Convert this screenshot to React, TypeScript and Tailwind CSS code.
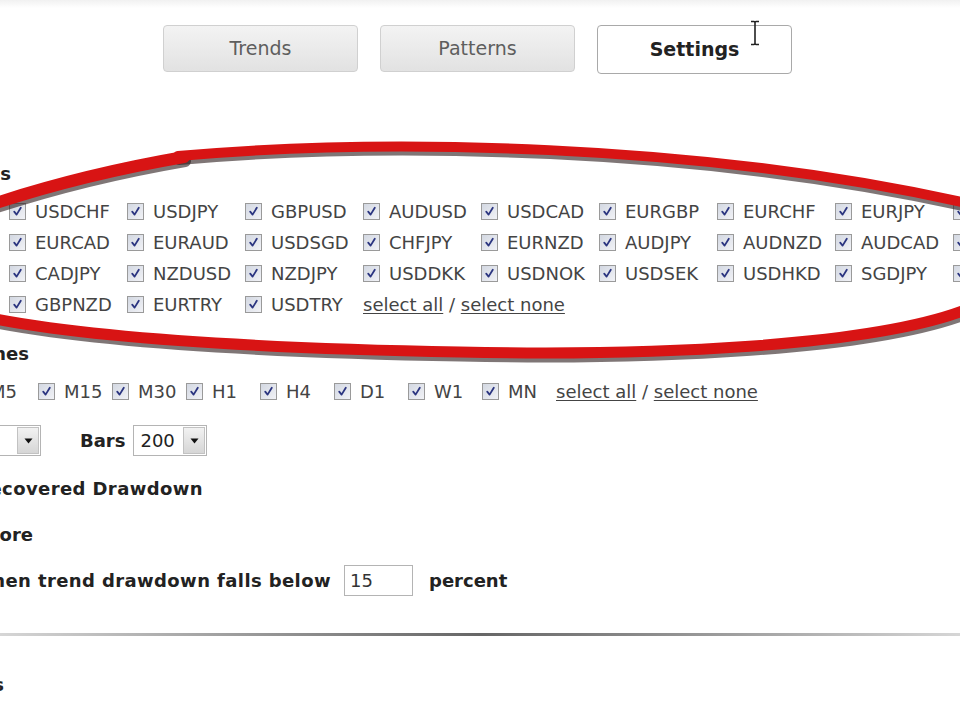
import React from "react";

const PAIRS: string[][] = [
  ["USDCHF", "USDJPY", "GBPUSD", "AUDUSD", "USDCAD", "EURGBP", "EURCHF", "EURJPY", "GBPJPY"],
  ["EURCAD", "EURAUD", "USDSGD", "CHFJPY", "EURNZD", "AUDJPY", "AUDNZD", "AUDCAD", "CADCHF"],
  ["CADJPY", "NZDUSD", "NZDJPY", "USDDKK", "USDNOK", "USDSEK", "USDHKD", "SGDJPY", "USDZAR"],
  ["GBPNZD", "EURTRY", "USDTRY"],
];

const TIMEFRAMES = ["M5", "M15", "M30", "H1", "H4", "D1", "W1", "MN"];

const Check = () => (
  <span className="w-[17px] h-[17px] shrink-0 border border-[#9a9a9a] bg-gradient-to-br from-[#d3d8e2] to-[#f1f2f6] flex items-center justify-center">
    <svg width="11" height="11" viewBox="0 0 11 11">
      <path d="M2.2 5.6 L4.6 8.6 L8.8 1.8" stroke="#2b3580" strokeWidth="1.8" fill="none" strokeLinecap="round" strokeLinejoin="round" />
    </svg>
  </span>
);

const Links = () => (
  <span className="whitespace-nowrap text-[#444]">
    <span className="underline underline-offset-2">select all</span> /{" "}
    <span className="underline underline-offset-2">select none</span>
  </span>
);

const Select = ({ value, width }: { value: string; width: string }) => (
  <span className={`${width} h-[31px] border border-[#b4b4b4] bg-white flex items-center shrink-0`}>
    <span className="flex-1 pl-[6px] text-[#222] font-normal">{value}</span>
    <span className="w-[22px] h-[27px] mr-[1px] border border-[#c2c2c2] bg-gradient-to-b from-[#f2f2f2] to-[#d6d6d6] flex items-center justify-center">
      <svg width="9" height="6" viewBox="0 0 9 6">
        <path d="M0.5 0.5 H8.5 L4.5 5.5 Z" fill="#111" />
      </svg>
    </span>
  </span>
);

// the red hand-drawn ring painted over the pair list
const RedRing = () => (
  <svg className="absolute inset-0 pointer-events-none" width="960" height="720" viewBox="0 0 960 720">
    <g transform="translate(1 4)" stroke="#2a1a1a" strokeOpacity="0.6" fill="none" strokeLinecap="round">
      <path d="M -10 205 Q 80 175 184 157" strokeWidth="12" />
      <path d="M 178 156 C 380 138, 700 142, 975 205" strokeWidth="10" />
      <path d="M 975 306 C 880 348, 640 356, 460 352 C 240 348, 80 336, -10 318" strokeWidth="11" />
    </g>
    <g stroke="#d81414" fill="none" strokeLinecap="round">
      <path d="M -10 205 Q 80 175 184 157" strokeWidth="12" />
      <path d="M 178 156 C 380 138, 700 142, 975 205" strokeWidth="10" />
      <path d="M 975 306 C 880 348, 640 356, 460 352 C 240 348, 80 336, -10 318" strokeWidth="11" />
    </g>
  </svg>
);

export default function App() {
  return (
    <div className="relative w-[960px] h-[720px] overflow-hidden bg-white font-['DejaVu_Sans',sans-serif] text-[18px] text-[#444]">
      <div className="h-[8px] bg-gradient-to-b from-[#f1f1f1] to-white" />

      {/* tabs */}
      <div className="flex gap-[22px] pl-[163px] pt-[17px]">
        <div className="w-[195px] h-[47px] rounded-[4px] border border-[#d0d0d0] bg-gradient-to-b from-[#f3f3f3] to-[#e2e2e2] flex items-center justify-center text-[19px] text-[#5e5e5e]">
          Trends
        </div>
        <div className="w-[195px] h-[47px] rounded-[4px] border border-[#d0d0d0] bg-gradient-to-b from-[#f3f3f3] to-[#e2e2e2] flex items-center justify-center text-[19px] text-[#5e5e5e]">
          Patterns
        </div>
        <div className="w-[195px] h-[49px] rounded-[4px] border border-[#a9a9a9] bg-white flex items-center justify-center text-[19px] font-bold text-[#222]">
          Settings
        </div>
      </div>

      {/* symbols */}
      <div className="mt-[87px] w-[11px] flex justify-end h-[24px] items-center">
        <span className="shrink-0 whitespace-nowrap font-bold text-[#222]">Symbols</span>
      </div>
      <div className="mt-[11px] pl-[9px] flex flex-col">
        {PAIRS.map((row, r) => (
          <div key={r} className="flex h-[31px] items-center">
            {row.map((p) => (
              <div key={p} className="w-[118px] shrink-0 flex items-center gap-[9px]">
                <Check />
                <span>{p}</span>
              </div>
            ))}
            {r === 3 && <Links />}
          </div>
        ))}
      </div>

      {/* timeframes */}
      <div className="mt-[21px] w-[29px] flex justify-end h-[24px] items-center">
        <span className="shrink-0 whitespace-nowrap font-bold text-[#222]">Timeframes</span>
      </div>
      <div className="mt-[14px] ml-[-36px] flex items-center h-[24px]">
        {TIMEFRAMES.map((t) => (
          <div key={t} className="w-[74px] shrink-0 flex items-center gap-[9px]">
            <Check />
            <span>{t}</span>
          </div>
        ))}
        <Links />
      </div>

      {/* period / bars */}
      <div className="mt-[22px] flex items-center h-[31px] font-bold text-[#222]">
        <div className="w-[41px] flex justify-end">
          <div className="shrink-0 flex items-center gap-[8px] whitespace-nowrap">
            <span>Period</span>
            <Select value="H1" width="w-[74px]" />
          </div>
        </div>
        <span className="ml-[39px]">Bars</span>
        <span className="ml-[8px]">
          <Select value="200" width="w-[74px]" />
        </span>
      </div>

      <div className="mt-[20px] w-[203px] flex justify-end h-[24px] items-center">
        <span className="shrink-0 whitespace-nowrap font-bold text-[#222] tracking-[0.4px]">Show Unrecovered Drawdown</span>
      </div>
      <div className="mt-[22px] w-[33px] flex justify-end h-[24px] items-center">
        <span className="shrink-0 whitespace-nowrap font-bold text-[#222]">Ignore</span>
      </div>
      <div className="mt-[19px] flex items-center h-[31px] font-bold text-[#222]">
        <div className="w-[331px] flex justify-end">
          <span className="shrink-0 whitespace-nowrap tracking-[0.4px]">Alert when trend drawdown falls below</span>
        </div>
        <span className="ml-[13px] w-[69px] h-[31px] border border-[#b4b4b4] flex items-center pl-[5px] font-normal text-[#333]">
          15
        </span>
        <span className="ml-[16px]">percent</span>
      </div>

      <div className="mt-[37px] h-[3px] bg-gradient-to-r from-[#d6d6d6] via-[#666] to-[#d6d6d6] blur-[0.5px]" />

      <div className="mt-[36px] w-[4px] flex justify-end h-[24px] items-center">
        <span className="shrink-0 whitespace-nowrap font-bold text-[#222]">Alerts</span>
      </div>

      <RedRing />

      {/* text cursor */}
      <svg className="absolute left-[749px] top-[20px] pointer-events-none" width="12" height="26" viewBox="0 0 12 26">
        <path d="M2 1.5 H5 Q6 1.5 6 3 V23 Q6 24.5 5 24.5 H2 M10 1.5 H7 Q6 1.5 6 3 M10 24.5 H7 Q6 24.5 6 23" stroke="#222" strokeWidth="1.6" fill="none" />
      </svg>
    </div>
  );
}
